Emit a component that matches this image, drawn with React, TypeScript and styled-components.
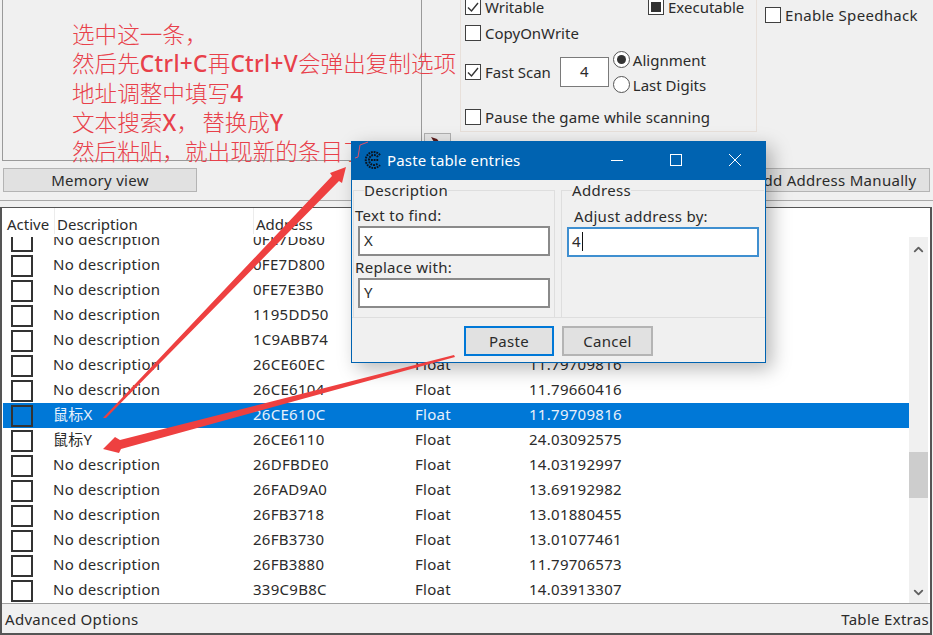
import React from "react";
import styled, { createGlobalStyle } from "styled-components";
import { ChevronUp, ChevronDown } from "lucide-react";

const GlobalStyle = createGlobalStyle`
  html, body {
    margin: 0;
    padding: 0;
    background: #f0f0f0;
  }
  * {
    box-sizing: border-box;
  }
`;

const uiFont = `"Noto Sans", "Noto Sans CJK SC", sans-serif`;

interface Entry {
  description: string;
  address: string;
  value?: string;
}

const entries: Entry[] = [
  { description: "No description", address: "0FE7D680" },
  { description: "No description", address: "0FE7D800" },
  { description: "No description", address: "0FE7E3B0" },
  { description: "No description", address: "1195DD50" },
  { description: "No description", address: "1C9ABB74" },
  { description: "No description", address: "26CE60EC", value: "11.79709816" },
  { description: "No description", address: "26CE6104", value: "11.79660416" },
  { description: "鼠标X", address: "26CE610C", value: "11.79709816" },
  { description: "鼠标Y", address: "26CE6110", value: "24.03092575" },
  { description: "No description", address: "26DFBDE0", value: "14.03192997" },
  { description: "No description", address: "26FAD9A0", value: "13.69192982" },
  { description: "No description", address: "26FB3718", value: "13.01880455" },
  { description: "No description", address: "26FB3730", value: "13.01077461" },
  { description: "No description", address: "26FB3880", value: "11.79706573" },
  { description: "No description", address: "339C9B8C", value: "14.03913307" },
];

const SELECTED_ADDRESS = "26CE610C";

const CheckBox = ({ state }: { state?: "checked" | "mixed" }) => (
  <CheckFrame>
    {state === "checked" && (
      <svg width="14" height="14" viewBox="0 0 14 14">
        <path d="M2 7.5 L5.5 11 L12 3" fill="none" stroke="#333" strokeWidth="1.4" />
      </svg>
    )}
    {state === "mixed" && <CheckFill />}
  </CheckFrame>
);

const CeLogo = () => (
  <svg width="20" height="20" viewBox="0 0 20 20">
    <g fill="none" stroke="#0a1420" strokeWidth="2" strokeDasharray="1.8 0.9">
      <path d="M17 5 A8 8 0 1 0 17 15" />
      <path d="M15 7 A5 5 0 1 0 15 13" />
      <path d="M8 10 H16" />
    </g>
  </svg>
);

const App = () => {
  return (
    <Page>
      <GlobalStyle />

      <TopArea>
        <NotePanel>
          <NoteLine>选中这一条，</NoteLine>
          <NoteLine>
            然后先<NoteLatin>Ctrl+C</NoteLatin>再<NoteLatin>Ctrl+V</NoteLatin>会弹出复制选项
          </NoteLine>
          <NoteLine>
            地址调整中填写<NoteLatin>4</NoteLatin>
          </NoteLine>
          <NoteLine>
            文本搜索<NoteLatin>X</NoteLatin>，<NoteGap />替换成<NoteLatin>Y</NoteLatin>
          </NoteLine>
          <NoteLine>然后粘贴，就出现新的条目了</NoteLine>
        </NotePanel>

        <ToolColumn>
          <SmallTool>
            <svg width="16" height="10" viewBox="0 0 16 10">
              <path d="M1 1 L7 3 L10 7 L4 6 Z" fill="#5a1a1a" />
              <circle cx="13" cy="7" r="1" fill="#334" />
            </svg>
          </SmallTool>
        </ToolColumn>

        <ScanGroup>
          <CheckRow>
            <CheckLabel $width={183}>
              <CheckBox state="checked" />
              Writable
            </CheckLabel>
            <CheckLabel>
              <CheckBox state="mixed" />
              Executable
            </CheckLabel>
          </CheckRow>
          <CheckRow>
            <CheckLabel>
              <CheckBox />
              CopyOnWrite
            </CheckLabel>
          </CheckRow>
          <FastScanRow>
            <CheckLabel>
              <CheckBox state="checked" />
              Fast Scan
            </CheckLabel>
            <AlignInput>4</AlignInput>
            <RadioColumn>
              <RadioLabel>
                <Radio $on />
                Alignment
              </RadioLabel>
              <RadioLabel>
                <Radio />
                Last Digits
              </RadioLabel>
            </RadioColumn>
          </FastScanRow>
          <PauseRow>
            <CheckLabel>
              <CheckBox />
              Pause the game while scanning
            </CheckLabel>
          </PauseRow>
        </ScanGroup>

        <SpeedhackArea>
          <CheckLabel>
            <CheckBox />
            Enable Speedhack
          </CheckLabel>
        </SpeedhackArea>
      </TopArea>

      <ButtonRow>
        <PanelButton $width={194}>Memory view</PanelButton>
        <PanelButton $width={190}>Add Address Manually</PanelButton>
      </ButtonRow>

      <Splitter />

      <TableFrame>
        <TableHeader>
          <HeaderCell>Active</HeaderCell>
          <HeaderCell $divider>Description</HeaderCell>
          <HeaderCell $divider>Address</HeaderCell>
          <HeaderCell>Type</HeaderCell>
          <HeaderCell>Value</HeaderCell>
        </TableHeader>

        <TableBody>
          <RowList>
            {entries.map((entry) => (
              <Row key={entry.address} $selected={entry.address === SELECTED_ADDRESS}>
                <ActiveBox />
                <span>{entry.description}</span>
                <span>{entry.address}</span>
                <span>Float</span>
                <span>{entry.value}</span>
              </Row>
            ))}
          </RowList>

          <ScrollBar>
            <ScrollEnd>
              <ChevronUp size={15} strokeWidth={3} />
            </ScrollEnd>
            <ScrollTrack>
              <ScrollThumb />
            </ScrollTrack>
            <ScrollEndBottom>
              <ChevronDown size={15} strokeWidth={3} />
            </ScrollEndBottom>
          </ScrollBar>
        </TableBody>

        <StatusBar>
          <span>Advanced Options</span>
          <span>Table Extras</span>
        </StatusBar>
      </TableFrame>

      <Dialog>
        <TitleBar>
          <CeLogo />
          <TitleText>Paste table entries</TitleText>
          <WindowButtons>
            <svg width="14" height="14" viewBox="0 0 14 14">
              <path d="M1 7.5 H13" stroke="#fff" strokeWidth="1" />
            </svg>
            <svg width="14" height="14" viewBox="0 0 14 14">
              <rect x="1.5" y="1.5" width="11" height="11" fill="none" stroke="#fff" strokeWidth="1" />
            </svg>
            <svg width="14" height="14" viewBox="0 0 14 14">
              <path d="M1 1 L13 13 M13 1 L1 13" stroke="#fff" strokeWidth="1" />
            </svg>
          </WindowButtons>
        </TitleBar>

        <GroupRow>
          <DescriptionGroup>
            <GroupLegend>Description</GroupLegend>
            <FieldLabel>Text to find:</FieldLabel>
            <TextField>X</TextField>
            <FieldLabel $top={1}>Replace with:</FieldLabel>
            <TextField>Y</TextField>
          </DescriptionGroup>
          <AddressGroup>
            <GroupLegend>Address</GroupLegend>
            <AddressLabel>Adjust address by:</AddressLabel>
            <TextField $focused>
              4<Caret />
            </TextField>
          </AddressGroup>
        </GroupRow>

        <DialogFooter>
          <DialogButton $primary>Paste</DialogButton>
          <DialogButton>Cancel</DialogButton>
        </DialogFooter>
      </Dialog>

      <ArrowLayer viewBox="0 0 933 635" width="933" height="635">
        <polygon
          points="103,418 332,176 330,173 346,167 342,183 339,181 106,418"
          fill="#ee4040"
        />
        <polygon
          points="454,355 120,440 115,437 103,449 119,453 121,449 455,357"
          fill="#ee4040"
        />
        <path d="M368 142 L360 145 L358 157 L355 158" fill="none" stroke="#e0506a" strokeWidth="1" />
      </ArrowLayer>
    </Page>
  );
};

export default App;

const Page = styled.div`
  position: relative;
  display: flex;
  flex-direction: column;
  width: 933px;
  height: 635px;
  overflow: hidden;
  background: #f0f0f0;
  color: #2b2b2b;
  font-family: ${uiFont};
  font-size: 15px;
`;

/* TOP PANELS */
const TopArea = styled.div`
  display: flex;
  height: 161px;
  flex: none;
`;

const NotePanel = styled.div`
  width: 420px;
  margin-left: 2px;
  padding: 19px 0 0 69px;
  border: 1px solid #9a9a9a;
  border-top: none;
  white-space: nowrap;
`;

const NoteLine = styled.div`
  height: 29.3px;
  line-height: 29.3px;
  font-family: "Noto Sans CJK SC", sans-serif;
  font-size: 22.6px;
  font-weight: 300;
  color: #e8404a;
`;

const NoteLatin = styled.span`
  font-family: "Noto Sans", sans-serif;
  font-weight: 500;
  letter-spacing: 0.35px;
`;

const NoteGap = styled.span`
  display: inline-block;
  width: 3px;
`;

const ToolColumn = styled.div`
  width: 38px;
  padding: 133px 0 0 2px;
`;

const SmallTool = styled.div`
  display: flex;
  justify-content: center;
  width: 27px;
  height: 27px;
  padding-top: 2px;
  border: 1px solid #b0b0b0;
  background: #e6e6e6;
`;

const ScanGroup = styled.div`
  width: 297px;
  height: 132px;
  padding-left: 4px;
  border: 1px solid #e8e0da;
  border-top: none;
`;

const CheckRow = styled.div`
  display: flex;
  height: 16px;
  margin-bottom: 10px;

  &:first-child {
    margin-top: -1px;
  }
`;

const CheckLabel = styled.div<{ $width?: number }>`
  display: flex;
  align-items: center;
  gap: 4px;
  height: 16px;
  width: ${(p) => (p.$width ? `${p.$width}px` : "auto")};
  line-height: 16px;
  white-space: nowrap;
`;

const CheckFrame = styled.span`
  display: flex;
  align-items: center;
  justify-content: center;
  flex: none;
  width: 16px;
  height: 16px;
  border: 1px solid #404040;
  background: #fff;
`;

const CheckFill = styled.span`
  width: 10px;
  height: 10px;
  background: #333;
`;

const FastScanRow = styled.div`
  display: flex;
  align-items: center;
  height: 42px;
  margin-top: 1px;
`;

const AlignInput = styled.div`
  width: 49px;
  height: 30px;
  margin-left: 9px;
  border: 1px solid #7a7a7a;
  background: #fff;
  text-align: center;
  line-height: 26px;
`;

const RadioColumn = styled.div`
  display: flex;
  flex-direction: column;
  gap: 8px;
  margin-left: 4px;
`;

const RadioLabel = styled.div`
  display: flex;
  align-items: center;
  gap: 3px;
  height: 17px;
  white-space: nowrap;
`;

const Radio = styled.span<{ $on?: boolean }>`
  display: flex;
  align-items: center;
  justify-content: center;
  width: 17px;
  height: 17px;
  border: 1px solid #555;
  border-radius: 50%;
  background: #fff;

  &::after {
    content: "";
    display: ${(p) => (p.$on ? "block" : "none")};
    width: 9px;
    height: 9px;
    border-radius: 50%;
    background: #333;
  }
`;

const PauseRow = styled.div`
  margin-top: 16px;
  letter-spacing: 0.1px;
`;

const SpeedhackArea = styled.div`
  padding: 7px 0 0 8px;
  letter-spacing: 0.3px;
`;

const ButtonRow = styled.div`
  display: flex;
  justify-content: space-between;
  flex: none;
  height: 24px;
  margin-top: 7px;
  padding: 0 3px;
  letter-spacing: 0.3px;
`;

const PanelButton = styled.div<{ $width: number }>`
  width: ${(p) => p.$width}px;
  border: 1px solid #b4b4b4;
  background: #e1e1e1;
  text-align: center;
  line-height: 23px;
`;

const Splitter = styled.div`
  flex: none;
  height: 7px;
  margin-top: 8px;
  border-top: 1px solid #a8a8a8;
`;

/* TABLE */
const TableFrame = styled.div`
  display: flex;
  flex-direction: column;
  flex: none;
  width: 932px;
  height: 428px;
  border: solid #555;
  border-width: 1px 2px 2px 2px;
  background: #fff;
`;

const TableHeader = styled.div`
  display: grid;
  grid-template-columns: 52px 199px 162px 115px 1fr;
  flex: none;
  height: 29px;
  background: #fff;
  line-height: 32px;
`;

const HeaderCell = styled.div<{ $divider?: boolean }>`
  padding-left: ${(p) => (p.$divider ? "2px" : "5px")};
  border-left: ${(p) => (p.$divider ? "1px solid #ececec" : "none")};
  height: 26px;
`;

const TableBody = styled.div`
  display: flex;
  flex: 1;
  min-height: 0;
`;

const RowList = styled.div`
  flex: 1;
  min-width: 0;
  overflow: hidden;
`;

const Row = styled.div<{ $selected?: boolean }>`
  display: grid;
  grid-template-columns: 50px 200px 162px 114px 1fr;
  align-items: center;
  height: 25px;
  margin-left: 1px;
  background: ${(p) => (p.$selected ? "#0078d7" : "transparent")};
  color: ${(p) => (p.$selected ? "#e8f1fb" : "#2b2b2b")};
  letter-spacing: 0.28px;

  &:first-child {
    margin-top: -9px;
  }

  & > span {
    margin-bottom: 2px;
    line-height: 23px;
    white-space: nowrap;
  }
`;

const ActiveBox = styled.span`
  width: 22px;
  height: 22px;
  margin-left: 8px;
  margin-bottom: 0 !important;
  border: 2px solid #333;
`;

const ScrollBar = styled.div`
  display: flex;
  flex-direction: column;
  flex: none;
  width: 19px;
  margin-right: 2px;
  background: #f0f0f0;
`;

const ScrollEnd = styled.div`
  display: flex;
  align-items: center;
  justify-content: center;
  flex: none;
  height: 25px;
  color: #606060;
`;

const ScrollEndBottom = styled(ScrollEnd)`
  padding-top: 3px;
`;

const ScrollTrack = styled.div`
  flex: 1;
`;

const ScrollThumb = styled.div`
  height: 46px;
  margin-top: 190px;
  background: #cdcdcd;
`;

const StatusBar = styled.div`
  display: flex;
  justify-content: space-between;
  flex: none;
  height: 30px;
  padding: 0 1px 0 3px;
  border-top: 1px solid #a0a0a0;
  background: #f0f0f0;
  line-height: 30px;
  letter-spacing: 0.3px;
`;

/* POPUP */
const Dialog = styled.div`
  position: absolute;
  left: 351px;
  top: 141px;
  z-index: 2;
  width: 415px;
  height: 222px;
  border: 1px solid #0063b1;
  border-top: none;
  background: #f0f0f0;
  box-shadow: 6px 6px 18px rgba(0, 0, 0, 0.28);
  letter-spacing: 0.3px;
`;

const TitleBar = styled.div`
  display: flex;
  align-items: center;
  height: 39px;
  margin: 0 -1px;
  padding: 0 0 1px 12px;
  background: #0063b1;
  color: #fff;
`;

const TitleText = styled.span`
  margin-left: 4px;
  letter-spacing: 0.15px;
`;

const WindowButtons = styled.div`
  display: flex;
  gap: 45px;
  margin-left: auto;
  margin-right: 24px;
`;

const GroupRow = styled.div`
  display: flex;
  gap: 6px;
  height: 138px;
  padding-left: 1px;
  border-bottom: 1px solid #dedede;
`;

const DescriptionGroup = styled.fieldset`
  width: 202px;
  margin: 0;
  padding: 0;
  border: 1px solid #dedede;
  border-bottom: none;
`;

const AddressGroup = styled(DescriptionGroup)`
  width: 203px;
  border-right: none;
`;

const GroupLegend = styled.legend`
  margin-left: 10px;
  padding: 0;
  line-height: 20px;
`;

const FieldLabel = styled.div<{ $top?: number }>`
  height: 20px;
  margin-top: ${(p) => p.$top ?? 5}px;
  margin-bottom: 1px;
  padding-left: 1px;
  line-height: 20px;
`;

const AddressLabel = styled(FieldLabel)`
  margin-top: 6px;
  padding-left: 12px;
`;

const TextField = styled.div<{ $focused?: boolean }>`
  display: flex;
  align-items: center;
  width: 192px;
  height: 30px;
  margin-left: ${(p) => (p.$focused ? 5 : 4)}px;
  padding: 0 0 2px ${(p) => (p.$focused ? 3 : 4)}px;
  border: 2px solid ${(p) => (p.$focused ? "#3f8fd0" : "#8a8a8a")};
  background: #fff;
`;

const Caret = styled.span`
  width: 1px;
  height: 19px;
  margin-left: 1px;
  background: #111;
`;

const DialogFooter = styled.div`
  display: flex;
  gap: 8px;
  padding: 8px 0 0 112px;
`;

const DialogButton = styled.div<{ $primary?: boolean }>`
  width: ${(p) => (p.$primary ? 90 : 91)}px;
  height: 30px;
  border: 2px solid ${(p) => (p.$primary ? "#0078d7" : "#b4b4b4")};
  background: #e1e1e1;
  text-align: center;
  line-height: 26px;
`;

const ArrowLayer = styled.svg`
  position: absolute;
  left: 0;
  top: 0;
  z-index: 3;
  pointer-events: none;
`;
